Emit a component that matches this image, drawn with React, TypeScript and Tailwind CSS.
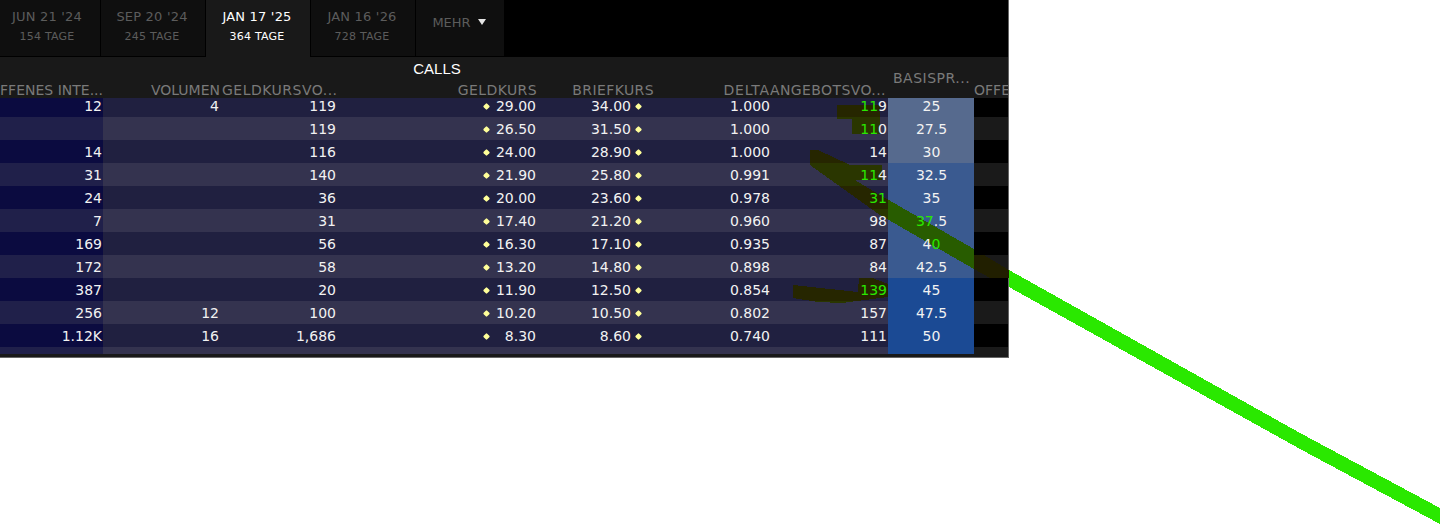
type Call = {
  oi: string;
  vol: string;
  bidVol: string;
  bid: string;
  ask: string;
  delta: string;
  askVol: [string, string];
  strike: [string, string, string];
};

// askVol: [green part, white part], strike: [white, green, white] - digits where the line runs under turn green
const rows: Call[] = [
  { oi: "12", vol: "4", bidVol: "119", bid: "29.00", ask: "34.00", delta: "1.000", askVol: ["11", "9"], strike: ["25", "", ""] },
  { oi: "", vol: "", bidVol: "119", bid: "26.50", ask: "31.50", delta: "1.000", askVol: ["11", "0"], strike: ["27.5", "", ""] },
  { oi: "14", vol: "", bidVol: "116", bid: "24.00", ask: "28.90", delta: "1.000", askVol: ["", "14"], strike: ["30", "", ""] },
  { oi: "31", vol: "", bidVol: "140", bid: "21.90", ask: "25.80", delta: "0.991", askVol: ["11", "4"], strike: ["32.5", "", ""] },
  { oi: "24", vol: "", bidVol: "36", bid: "20.00", ask: "23.60", delta: "0.978", askVol: ["31", ""], strike: ["35", "", ""] },
  { oi: "7", vol: "", bidVol: "31", bid: "17.40", ask: "21.20", delta: "0.960", askVol: ["", "98"], strike: ["", "37", ".5"] },
  { oi: "169", vol: "", bidVol: "56", bid: "16.30", ask: "17.10", delta: "0.935", askVol: ["", "87"], strike: ["4", "0", ""] },
  { oi: "172", vol: "", bidVol: "58", bid: "13.20", ask: "14.80", delta: "0.898", askVol: ["", "84"], strike: ["42.5", "", ""] },
  { oi: "387", vol: "", bidVol: "20", bid: "11.90", ask: "12.50", delta: "0.854", askVol: ["139", ""], strike: ["45", "", ""] },
  { oi: "256", vol: "12", bidVol: "100", bid: "10.20", ask: "10.50", delta: "0.802", askVol: ["", "157"], strike: ["47.5", "", ""] },
  { oi: "1.12K", vol: "16", bidVol: "1,686", bid: "8.30", ask: "8.60", delta: "0.740", askVol: ["", "111"], strike: ["50", "", ""] },
];

const tabs = [
  { date: "JUN 21 '24", days: "154 TAGE" },
  { date: "SEP 20 '24", days: "245 TAGE" },
  { date: "JAN 17 '25", days: "364 TAGE", active: true },
  { date: "JAN 16 '26", days: "728 TAGE" },
];

function strikeBg(i: number) {
  if (i < 3) return "bg-[#566a8e]";
  if (i < 8) return "bg-[#3a5a90]";
  return "bg-[#1b4a94]";
}

function Dot() {
  return <span className="w-[5px] h-[5px] rotate-45 rounded-[1px] bg-[#ffff99] shrink-0" />;
}

function Row({ r, i }: { r: Call; i: number }) {
  const odd = i % 2 === 1;
  const cellH = i === 0 ? "h-[16px]" : "h-[25px]";
  return (
    <div className={`flex h-[23px] first:h-[19px] leading-[25px] first:leading-[16px] text-[14px] text-[#f2f2f2] ${odd ? "bg-[#34334f]" : "bg-[#202040]"}`}>
      <div className={`w-[103px] pr-px text-right ${odd ? "bg-[#20204a]" : "bg-[#0b0b40]"}`}><span className="relative z-20">{r.oi}</span></div>
      <div className="w-[116px] text-right"><span className="relative z-20">{r.vol}</span></div>
      <div className="w-[117px] text-right"><span className="relative z-20">{r.bidVol}</span></div>
      <div className={`w-[200px] flex items-center pl-[148px] ${cellH}`}>
        <Dot />
        <span className="relative z-20 flex-1 text-right">{r.bid}</span>
      </div>
      <div className={`w-[106px] flex items-center pr-px ${cellH}`}>
        <span className="relative z-20 flex-1 text-right">{r.ask}</span>
        <span className="w-[5px]" />
        <Dot />
      </div>
      <div className="w-[128px] text-right"><span className="relative z-20">{r.delta}</span></div>
      <div className="w-[118px] pr-px text-right">
        <span className="relative z-20 text-[#2ae800]">{r.askVol[0]}</span>
        <span className="relative z-20">{r.askVol[1]}</span>
      </div>
      <div className={`w-[86px] pl-px text-center ${strikeBg(i)}`}>
        <span className="relative z-20">{r.strike[0]}</span>
        <span className="relative z-20 text-[#2ae800]">{r.strike[1]}</span>
        <span className="relative z-20">{r.strike[2]}</span>
      </div>
      <div className={`flex-1 ${odd ? "bg-[#1a1a1a]" : "bg-black"}`} />
    </div>
  );
}

const marks =
  "M810 150 L818 150 L850 165 L882 165 L882 180 L855 180 L880 195 L974 249 L1009 270 L1009 278 L990 278 L974 269 L880 215 L810 165 Z " +
  "M837 105 H880 V134 H852 V119 H837 Z " +
  "M793 285 L858 292 L859 277 L865 275 L888 284 L888 297 L842 303 L818 302 L793 298 Z";

export default function App() {
  return (
    <div className="relative w-[1441px] h-[525px] bg-white overflow-hidden font-['DejaVu_Sans',sans-serif]">
      <div className="w-[1009px] h-[358px] bg-[#191919] border-r border-b border-[#666666] flex flex-col">
        <div className="h-[57px] bg-black flex items-start gap-px -ml-[4px]">
          {tabs.map((t) => (
            <div
              key={t.date}
              className={`w-[104px] flex flex-col items-center pt-[9px] pr-[2px] ${t.active ? "bg-[#191919] h-[57px] text-white" : "bg-[#0f0f0f] h-[56px] text-[#5c5c5c]"}`}
            >
              <span className="text-[13px] leading-[16px] tracking-[0.2px]">{t.date}</span>
              <span className="text-[11px] leading-[16px] mt-[4px] tracking-[0.2px]">{t.days}</span>
            </div>
          ))}
          <div className="w-[88px] h-[56px] bg-[#0f0f0f] flex items-center justify-center gap-[7px] pb-[10px] pr-[2px] text-[13px] text-[#5c5c5c]">
            MEHR
            <span className="w-0 h-0 mb-[3px] border-x-[4px] border-x-transparent border-t-[6px] border-t-[#e5e5e5]" />
          </div>
        </div>
        <div className="relative h-[41px] text-[14px] leading-[17px] text-[#7a7a7a] whitespace-nowrap">
          <div className="h-[15px] flex justify-center">
            <span className="text-white text-[15px] leading-[24px] ml-[-134px] font-['Liberation_Sans',sans-serif]">CALLS</span>
          </div>
          <div className="flex mt-[10px] h-[16px]">
            <div className="w-[103px] flex justify-end overflow-hidden"><span>OFFENES INTE...</span></div>
            <div className="w-[117px] text-right">VOLUMEN</div>
            <div className="w-[117px] pl-[2px] overflow-hidden tracking-[0.5px]">GELDKURSVO...</div>
            <div className="w-[200px] text-right tracking-[0.4px]">GELDKURS</div>
            <div className="w-[117px] text-right tracking-[0.4px]">BRIEFKURS</div>
            <div className="w-[116px] text-right tracking-[0.8px]">DELTA</div>
            <div className="w-[118px] text-left overflow-hidden tracking-[0.4px]">ANGEBOTSVO...</div>
            <div className="w-[86px] relative"><span className="absolute left-[5px] -top-[12px] tracking-[0.5px]">BASISPR...</span></div>
            <div className="flex-1 overflow-hidden">OFFENES</div>
          </div>
        </div>
        <div className="flex flex-col">
          {rows.map((r, i) => (
            <Row key={r.delta + r.bid} r={r} i={i} />
          ))}
          <div className="flex h-[7px] bg-[#34334f]">
            <div className="w-[103px] bg-[#20204a]" />
            <div className="w-[785px]" />
            <div className="w-[86px] bg-[#1b4a94]" />
            <div className="flex-1 bg-[#1a1a1a]" />
          </div>
        </div>
      </div>
      <svg className="absolute inset-0 z-10 pointer-events-none" width="1441" height="525" viewBox="0 0 1441 525" shapeRendering="crispEdges">
        <defs>
          <clipPath id="even">
            <rect x="0" y="98" width="888" height="19" />
            <rect x="0" y="140" width="888" height="23" />
            <rect x="0" y="186" width="888" height="23" />
            <rect x="0" y="232" width="888" height="23" />
            <rect x="0" y="278" width="888" height="23" />
          </clipPath>
          <clipPath id="odd">
            <rect x="0" y="117" width="888" height="23" />
            <rect x="0" y="163" width="888" height="23" />
            <rect x="0" y="209" width="888" height="23" />
            <rect x="0" y="301" width="888" height="23" />
          </clipPath>
          <clipPath id="strike">
            <rect x="888" y="98" width="86" height="256" />
          </clipPath>
          <clipPath id="side">
            <rect x="974" y="255" width="35" height="23" />
          </clipPath>
        </defs>
        <path d="M1009 270 L1300 433 L1440 508 L1440 524 L1300 449 L1009 287 Z" fill="#2ae800" />
        <g clipPath="url(#even)"><path d={marks} fill="#262600" /></g>
        <g clipPath="url(#odd)"><path d={marks} fill="#2a3600" /></g>
        <g clipPath="url(#strike)"><path d={marks} fill="#285c00" /></g>
        <g clipPath="url(#side)"><path d={marks} fill="#211f00" /></g>
      </svg>
    </div>
  );
}
